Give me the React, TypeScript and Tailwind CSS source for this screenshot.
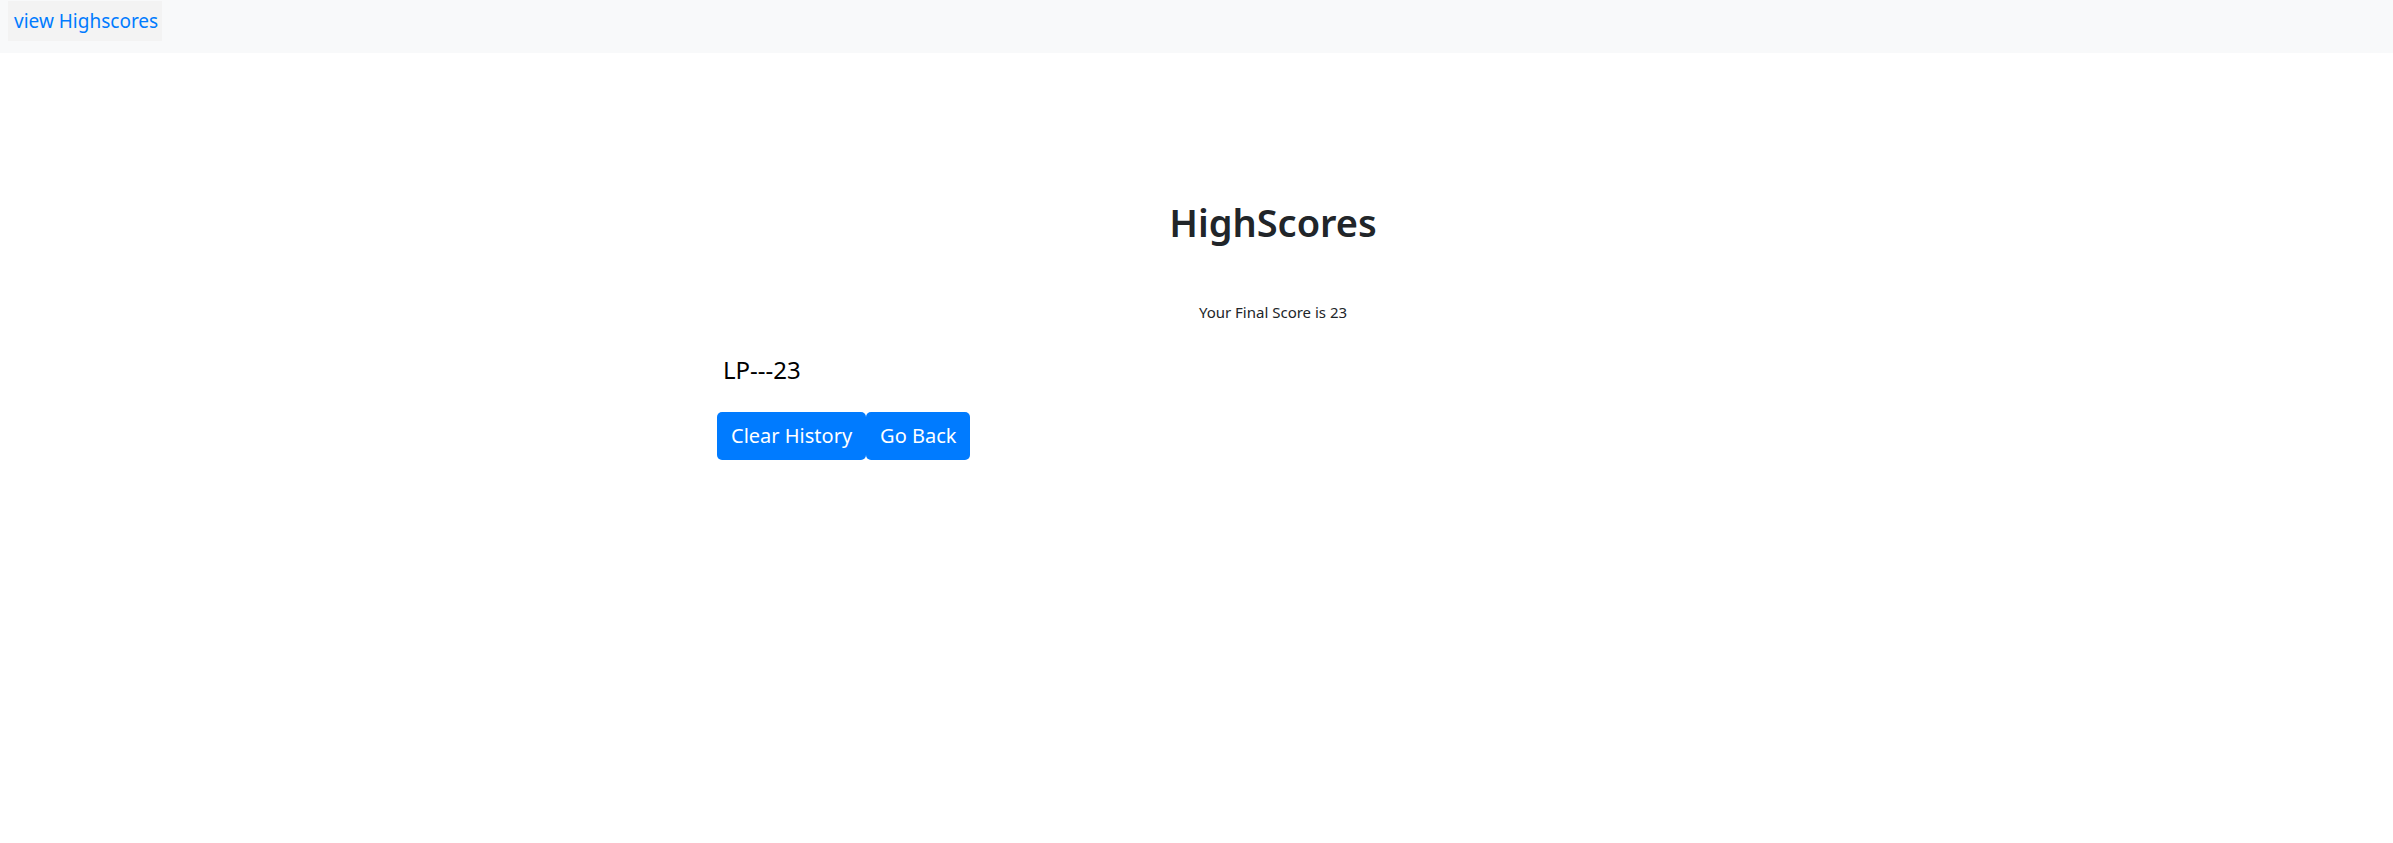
import React from "react";

export default function App() {
  return (
    <div className="min-h-[843px] bg-white text-[#212529]" style={{ fontFamily: '"Noto Sans", "Open Sans", sans-serif' }}>
      <nav className="h-[53px] bg-[#f8f9fa] pl-2 pt-[1px]">
        <a href="#" className="inline-flex h-[40px] w-[154px] items-center bg-[#f3f3f3] pl-[6px] text-[19px] text-[#007bff]">
          view Highscores
        </a>
      </nav>
      <main className="ml-[717px] w-[1112px] pt-[147px]">
        <h1 className="text-center text-[38px] font-semibold leading-[1.2]">HighScores</h1>
        <p className="mt-[55px] text-center text-[15px]">Your Final Score is 23</p>
        <div className="mt-[33px] pl-[6px] text-[24px] leading-[1.2] text-black">LP---23</div>
        <div className="mt-[27px] flex">
          <button className="h-[48px] rounded-[5px] bg-[#007bff] px-[14px] text-[20px] text-white">Clear History</button>
          <button className="h-[48px] rounded-[5px] bg-[#007bff] px-[14px] text-[20px] text-white">Go Back</button>
        </div>
      </main>
    </div>
  );
}
